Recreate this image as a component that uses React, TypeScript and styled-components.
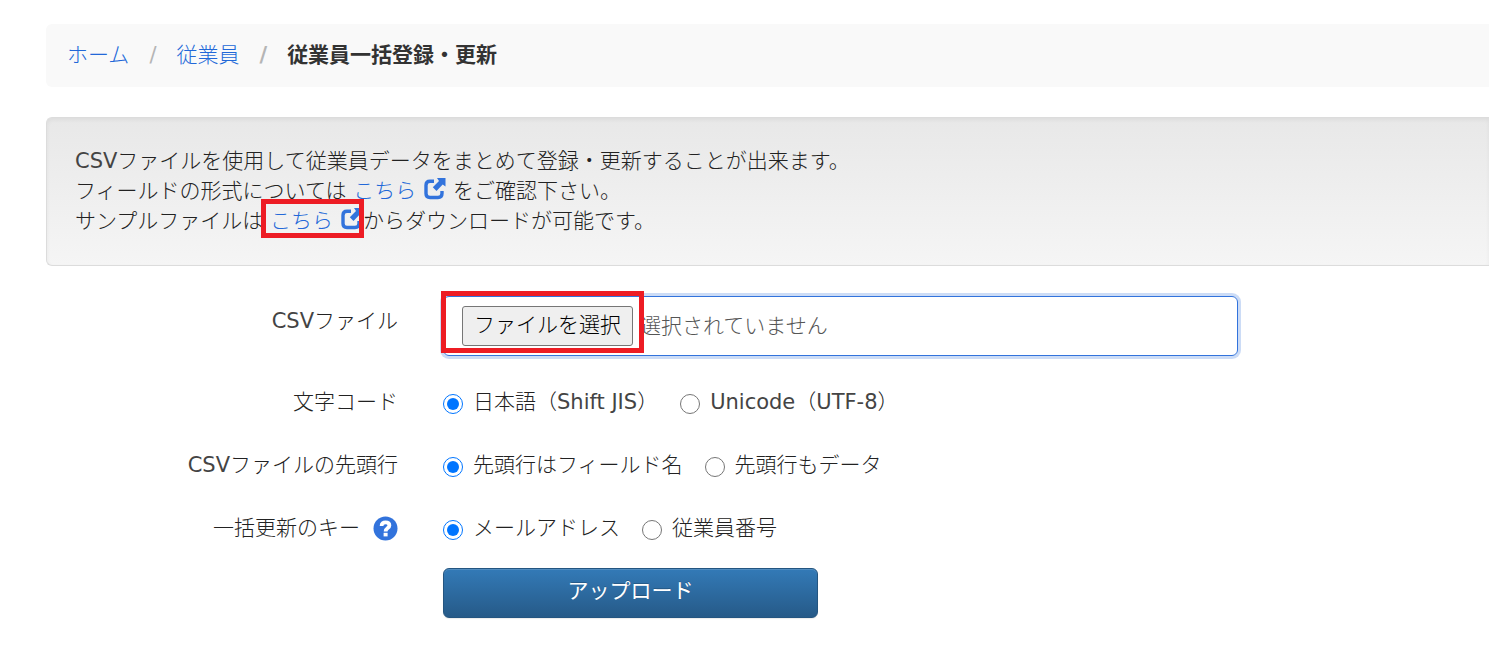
import React, { useRef, useState } from "react";
import styled, { createGlobalStyle } from "styled-components";

const GlobalStyle = createGlobalStyle`
  *, *::before, *::after { box-sizing: border-box; }
  body {
    margin: 0;
    background: #fff;
    color: #222;
    font-family: "DejaVu Sans", "Noto Sans CJK JP", sans-serif;
    font-size: 21px;
    font-weight: 300;
    line-height: 30px;
  }
`;

const Page = styled.main`
  padding: 24px 0 50px 46px;
`;

const Breadcrumb = styled.ol`
  display: flex;
  flex-wrap: wrap;
  margin: 0 0 30px;
  padding: 16px 21px 17px;
  list-style: none;
  background: #f9f9f9;
  border-radius: 6px 0 0 6px;
`;

const Crumb = styled.li<{ $current?: boolean }>`
  color: #333;
  font-weight: ${(p) => (p.$current ? 700 : 300)};
  &:not(:first-child)::before {
    content: "/";
    padding: 0 20px;
    color: #b5b5b5;
    font-weight: ${(p) => (p.$current ? 700 : 400)};
  }
`;

const Latin = styled.span`
  color: #444;
  font-weight: 400;
`;

const Link = styled.a`
  color: #2268d8;
  text-decoration: none;
`;

const Well = styled.section`
  margin-bottom: 30px;
  padding: 28px 28px 29px;
  border: 1px solid #dcdcdc;
  border-right: 0;
  border-radius: 6px 0 0 6px;
  background: linear-gradient(#e8e8e8, #f5f5f5);
  box-shadow: inset 0 2px 4px rgba(0, 0, 0, 0.05);
  p { margin: 0; }
`;

const Marked = styled.span<{ $inset: string }>`
  position: relative;
  display: inline-block;
  &::after {
    content: "";
    position: absolute;
    inset: ${(p) => p.$inset};
    border: 5px solid #ed1c24;
    pointer-events: none;
  }
`;

const LinkIcon = styled.svg`
  width: 22px;
  height: 22px;
  margin-left: 8px;
  vertical-align: -2px;
`;

const Form = styled.form`
  display: grid;
  grid-template-columns: minmax(200px, 352px) minmax(0, 795px);
  column-gap: 45px;
`;

const Label = styled.div`
  display: flex;
  justify-content: flex-end;
  align-items: center;
  height: 30px;
  text-align: right;
  svg { margin-left: 13px; }
`;

const FileLabel = styled(Label).attrs({ as: "label" })`
  margin-top: 10px;
`;

const FileField = styled.div`
  display: flex;
  align-items: center;
  gap: 7px;
  height: 60px;
  margin-bottom: 31px;
  padding: 0 18px;
  border: 1px solid #3273dc;
  border-radius: 6px;
  box-shadow: 0 0 0 3px rgba(50, 115, 220, 0.25);
  color: #555;
`;

const HiddenFile = styled.input`
  display: none;
`;

const PickButton = styled.button`
  display: block;
  height: 40px;
  padding: 0 11px 2px;
  border: 1px solid #767676;
  border-radius: 3px;
  background: #efefef;
  color: #000;
  font: inherit;
`;

const Radios = styled.div`
  display: flex;
  gap: 22px;
  height: 30px;
  margin-bottom: 33px;
`;

const RadioLabel = styled.label`
  display: flex;
  align-items: center;
  gap: 10px;
`;

const Radio = styled.input`
  width: 20px;
  height: 20px;
  margin: 4px 0 0;
  accent-color: #0075ff;
`;

const Submit = styled.button`
  grid-column: 2;
  width: 375px;
  max-width: 100%;
  height: 50px;
  margin-top: -8px;
  padding: 0 0 4px;
  border: 1px solid #245580;
  border-radius: 6px;
  background: linear-gradient(#337ab7, #265a88);
  box-shadow: inset 0 1px 0 rgba(255, 255, 255, 0.15), 0 1px 1px rgba(0, 0, 0, 0.08);
  color: #fff;
  font: inherit;
  font-weight: 400;
  text-shadow: 0 -1px 0 rgba(0, 0, 0, 0.2);
`;

const NewWindow = () => (
  <LinkIcon viewBox="0 0 22 22" aria-hidden="true">
    <path d="M10 3.2H6Q2 3.2 2 7.2V15.5Q2 19.5 6 19.5H14Q18 19.5 18 15.5V13" fill="none" stroke="#3273dc" strokeWidth="3.4" />
    <path d="M13 0H21.5V8.5L18.7 6.6L12.5 13L8.8 9.3L15 3Z" fill="#3273dc" />
  </LinkIcon>
);

const Help = () => (
  <svg width="25" height="25" viewBox="0 0 25 25" aria-hidden="true">
    <circle cx="12.5" cy="12.5" r="12" fill="#3273dc" />
    <path d="M8.6 10C8.6 7.6 10.2 6.4 12.5 6.4C14.8 6.4 16.4 7.6 16.4 9.6C16.4 12.2 12.6 12 12.6 15.4" fill="none" stroke="#fff" strokeWidth="3.8" />
    <rect x="10.6" y="16.8" width="4" height="3.6" fill="#fff" />
  </svg>
);

const groups = [
  {
    name: "encoding",
    label: <>文字コード</>,
    options: [<>日本語（<Latin>Shift JIS</Latin>）</>, <><Latin>Unicode</Latin>（<Latin>UTF-8</Latin>）</>],
  },
  {
    name: "header",
    label: <><Latin>CSV</Latin>ファイルの先頭行</>,
    options: [<>先頭行はフィールド名</>, <>先頭行もデータ</>],
  },
  {
    name: "key",
    label: <>一括更新のキー<Help /></>,
    options: [<>メールアドレス</>, <>従業員番号</>],
  },
];

export default function App() {
  const file = useRef<HTMLInputElement>(null);
  const [name, setName] = useState("選択されていません");
  return (
    <Page>
      <GlobalStyle />
      <nav>
        <Breadcrumb>
          <Crumb><Link href="#home">ホーム</Link></Crumb>
          <Crumb><Link href="#employees">従業員</Link></Crumb>
          <Crumb $current>従業員一括登録・更新</Crumb>
        </Breadcrumb>
      </nav>
      <Well>
        <p><Latin>CSV</Latin>ファイルを使用して従業員データをまとめて登録・更新することが出来ます。</p>
        <p>フィールドの形式については <Link href="#format">こちら<NewWindow /></Link> をご確認下さい。</p>
        <p>サンプルファイルは <Marked $inset="-7px -1px -2px -9px"><Link href="#sample">こちら<NewWindow /></Link></Marked>からダウンロードが可能です。</p>
      </Well>
      <Form onSubmit={(e) => e.preventDefault()}>
        <FileLabel htmlFor="csv"><Latin>CSV</Latin>ファイル</FileLabel>
        <FileField>
          <HiddenFile id="csv" type="file" accept=".csv" ref={file} onChange={(e) => setName(e.target.files?.[0]?.name ?? "選択されていません")} />
          <Marked $inset="-15px -11px -7px -21px">
            <PickButton type="button" onClick={() => file.current?.click()}>ファイルを選択</PickButton>
          </Marked>
          <span>{name}</span>
        </FileField>
        {groups.map((g) => (
          <React.Fragment key={g.name}>
            <Label id={g.name}>{g.label}</Label>
            <Radios role="radiogroup" aria-labelledby={g.name}>
              {g.options.map((option, i) => (
                <RadioLabel key={i}>
                  <Radio type="radio" name={g.name} defaultChecked={i === 0} />
                  <span>{option}</span>
                </RadioLabel>
              ))}
            </Radios>
          </React.Fragment>
        ))}
        <Submit type="submit">アップロード</Submit>
      </Form>
    </Page>
  );
}
